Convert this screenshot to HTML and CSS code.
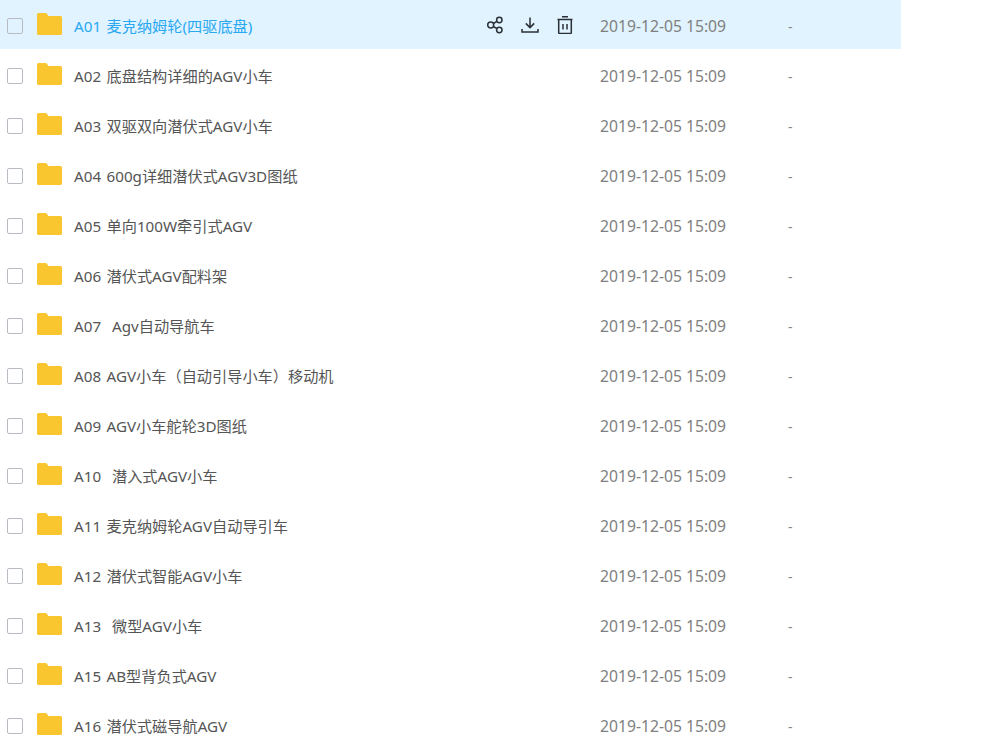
FILE: index.html
```html
<!DOCTYPE html>
<html lang="zh-CN">
<head>
<meta charset="utf-8">
<title>文件列表</title>
<link rel="stylesheet" href="styles.css">
</head>
<body>
<div class="list">
  <div class="row active">
    <span class="check"></span>
    <svg class="folder" viewBox="0 0 25 22"><path d="M0 1.500A1.500 1.500 0 0 1 1.500 0h7a1.500 1.500 0 0 1 1.200.6L11.500 3h12A1.500 1.500 0 0 1 25 4.500v16a1.500 1.500 0 0 1-1.500 1.500h-22A1.500 1.500 0 0 1 0 20.500z"/></svg>
    <span class="name">A01 麦克纳姆轮(四驱底盘)</span>
    <span class="actions">
      <svg class="icon" viewBox="0 0 18 18"><circle cx="4.700" cy="9" r="3"/><circle cx="13.300" cy="4" r="2.700"/><circle cx="13.300" cy="14" r="2.700"/><path d="M7.300 7.500l3.700-2.200M7.300 10.500l3.700 2.200"/></svg>
      <svg class="icon" viewBox="0 0 18 18"><path d="M9 1.500v10M4.800 7.400L9 11.600l4.200-4.200M1 13v3h16v-3"/></svg>
      <svg class="icon" viewBox="0 0 18 18"><path d="M6 .8h6M1.500 3.500h15M2.700 3.500V16.500a1 1 0 0 0 1 1h10.600a1 1 0 0 0 1-1V3.500M7 8v5.500M11 8v5.500"/></svg>
    </span>
    <span class="date">2019-12-05 15:09</span>
    <span class="size">-</span>
  </div>
  <div class="row"><span class="check"></span><svg class="folder" viewBox="0 0 25 22"><path d="M0 1.500A1.500 1.500 0 0 1 1.500 0h7a1.500 1.500 0 0 1 1.200.6L11.500 3h12A1.500 1.500 0 0 1 25 4.500v16a1.500 1.500 0 0 1-1.500 1.500h-22A1.500 1.500 0 0 1 0 20.500z"/></svg><span class="name">A02 底盘结构详细的AGV小车</span><span class="date">2019-12-05 15:09</span><span class="size">-</span></div>
  <div class="row"><span class="check"></span><svg class="folder" viewBox="0 0 25 22"><path d="M0 1.500A1.500 1.500 0 0 1 1.500 0h7a1.500 1.500 0 0 1 1.200.6L11.500 3h12A1.500 1.500 0 0 1 25 4.500v16a1.500 1.500 0 0 1-1.500 1.500h-22A1.500 1.500 0 0 1 0 20.500z"/></svg><span class="name">A03 双驱双向潜伏式AGV小车</span><span class="date">2019-12-05 15:09</span><span class="size">-</span></div>
  <div class="row"><span class="check"></span><svg class="folder" viewBox="0 0 25 22"><path d="M0 1.500A1.500 1.500 0 0 1 1.500 0h7a1.500 1.500 0 0 1 1.200.6L11.500 3h12A1.500 1.500 0 0 1 25 4.500v16a1.500 1.500 0 0 1-1.500 1.500h-22A1.500 1.500 0 0 1 0 20.500z"/></svg><span class="name">A04 600g详细潜伏式AGV3D图纸</span><span class="date">2019-12-05 15:09</span><span class="size">-</span></div>
  <div class="row"><span class="check"></span><svg class="folder" viewBox="0 0 25 22"><path d="M0 1.500A1.500 1.500 0 0 1 1.500 0h7a1.500 1.500 0 0 1 1.200.6L11.500 3h12A1.500 1.500 0 0 1 25 4.500v16a1.500 1.500 0 0 1-1.500 1.500h-22A1.500 1.500 0 0 1 0 20.500z"/></svg><span class="name">A05 单向100W牵引式AGV</span><span class="date">2019-12-05 15:09</span><span class="size">-</span></div>
  <div class="row"><span class="check"></span><svg class="folder" viewBox="0 0 25 22"><path d="M0 1.500A1.500 1.500 0 0 1 1.500 0h7a1.500 1.500 0 0 1 1.200.6L11.500 3h12A1.500 1.500 0 0 1 25 4.500v16a1.500 1.500 0 0 1-1.500 1.500h-22A1.500 1.500 0 0 1 0 20.500z"/></svg><span class="name">A06 潜伏式AGV配料架</span><span class="date">2019-12-05 15:09</span><span class="size">-</span></div>
  <div class="row"><span class="check"></span><svg class="folder" viewBox="0 0 25 22"><path d="M0 1.500A1.500 1.500 0 0 1 1.500 0h7a1.500 1.500 0 0 1 1.200.6L11.500 3h12A1.500 1.500 0 0 1 25 4.500v16a1.500 1.500 0 0 1-1.500 1.500h-22A1.500 1.500 0 0 1 0 20.500z"/></svg><span class="name">A07&nbsp; Agv自动导航车</span><span class="date">2019-12-05 15:09</span><span class="size">-</span></div>
  <div class="row"><span class="check"></span><svg class="folder" viewBox="0 0 25 22"><path d="M0 1.500A1.500 1.500 0 0 1 1.500 0h7a1.500 1.500 0 0 1 1.200.6L11.500 3h12A1.500 1.500 0 0 1 25 4.500v16a1.500 1.500 0 0 1-1.500 1.500h-22A1.500 1.500 0 0 1 0 20.500z"/></svg><span class="name">A08 AGV小车（自动引导小车）移动机</span><span class="date">2019-12-05 15:09</span><span class="size">-</span></div>
  <div class="row"><span class="check"></span><svg class="folder" viewBox="0 0 25 22"><path d="M0 1.500A1.500 1.500 0 0 1 1.500 0h7a1.500 1.500 0 0 1 1.200.6L11.500 3h12A1.500 1.500 0 0 1 25 4.500v16a1.500 1.500 0 0 1-1.500 1.500h-22A1.500 1.500 0 0 1 0 20.500z"/></svg><span class="name">A09 AGV小车舵轮3D图纸</span><span class="date">2019-12-05 15:09</span><span class="size">-</span></div>
  <div class="row"><span class="check"></span><svg class="folder" viewBox="0 0 25 22"><path d="M0 1.500A1.500 1.500 0 0 1 1.500 0h7a1.500 1.500 0 0 1 1.200.6L11.500 3h12A1.500 1.500 0 0 1 25 4.500v16a1.500 1.500 0 0 1-1.500 1.500h-22A1.500 1.500 0 0 1 0 20.500z"/></svg><span class="name">A10&nbsp; 潜入式AGV小车</span><span class="date">2019-12-05 15:09</span><span class="size">-</span></div>
  <div class="row"><span class="check"></span><svg class="folder" viewBox="0 0 25 22"><path d="M0 1.500A1.500 1.500 0 0 1 1.500 0h7a1.500 1.500 0 0 1 1.200.6L11.500 3h12A1.500 1.500 0 0 1 25 4.500v16a1.500 1.500 0 0 1-1.500 1.500h-22A1.500 1.500 0 0 1 0 20.500z"/></svg><span class="name">A11 麦克纳姆轮AGV自动导引车</span><span class="date">2019-12-05 15:09</span><span class="size">-</span></div>
  <div class="row"><span class="check"></span><svg class="folder" viewBox="0 0 25 22"><path d="M0 1.500A1.500 1.500 0 0 1 1.500 0h7a1.500 1.500 0 0 1 1.200.6L11.500 3h12A1.500 1.500 0 0 1 25 4.500v16a1.500 1.500 0 0 1-1.500 1.500h-22A1.500 1.500 0 0 1 0 20.500z"/></svg><span class="name">A12 潜伏式智能AGV小车</span><span class="date">2019-12-05 15:09</span><span class="size">-</span></div>
  <div class="row"><span class="check"></span><svg class="folder" viewBox="0 0 25 22"><path d="M0 1.500A1.500 1.500 0 0 1 1.500 0h7a1.500 1.500 0 0 1 1.200.6L11.500 3h12A1.500 1.500 0 0 1 25 4.500v16a1.500 1.500 0 0 1-1.500 1.500h-22A1.500 1.500 0 0 1 0 20.500z"/></svg><span class="name">A13&nbsp; 微型AGV小车</span><span class="date">2019-12-05 15:09</span><span class="size">-</span></div>
  <div class="row"><span class="check"></span><svg class="folder" viewBox="0 0 25 22"><path d="M0 1.500A1.500 1.500 0 0 1 1.500 0h7a1.500 1.500 0 0 1 1.200.6L11.500 3h12A1.500 1.500 0 0 1 25 4.500v16a1.500 1.500 0 0 1-1.500 1.500h-22A1.500 1.500 0 0 1 0 20.500z"/></svg><span class="name">A15 AB型背负式AGV</span><span class="date">2019-12-05 15:09</span><span class="size">-</span></div>
  <div class="row"><span class="check"></span><svg class="folder" viewBox="0 0 25 22"><path d="M0 1.500A1.500 1.500 0 0 1 1.500 0h7a1.500 1.500 0 0 1 1.200.6L11.500 3h12A1.500 1.500 0 0 1 25 4.500v16a1.500 1.500 0 0 1-1.500 1.500h-22A1.500 1.500 0 0 1 0 20.500z"/></svg><span class="name">A16 潜伏式磁导航AGV</span><span class="date">2019-12-05 15:09</span><span class="size">-</span></div>
</div>
</body>
</html>
```
FILE: styles.css
```css
html, body {
  margin: 0;
  padding: 0;
  height: 742px;
  overflow: hidden;
  background: #fff;
}
body {
  font-family: "Noto Sans", "Noto Sans CJK SC", sans-serif;
  font-size: 14px;
  color: #666;
}
.list {
  width: 901px;
}
.row {
  display: flex;
  align-items: center;
  height: 50px;
  box-sizing: border-box;
  padding-left: 7px;
  border-bottom: 1px solid transparent;
  background-clip: padding-box;
}
.row.active {
  background-color: #e0f3fe;
}
.check {
  flex: none;
  width: 14px;
  height: 14px;
  border: 1px solid #b8bcc2;
  border-radius: 2px;
  margin-top: 3px;
}
.folder {
  flex: none;
  width: 25px;
  height: 22px;
  margin-left: 14px;
  margin-top: -1px;
  fill: #f9c62f;
}
.name {
  flex: 1;
  margin-left: 12px;
  font-size: 15.2px;
  word-spacing: 1.5px;
  color: #555;
  white-space: nowrap;
}
.active .name {
  color: #2aa8f2;
}
.actions {
  flex: none;
  display: flex;
  gap: 17px;
  margin-right: 26px;
}
.icon {
  width: 18px;
  height: 18px;
  fill: none;
  stroke: #2b2f36;
  stroke-width: 1.500;
}
.date {
  flex: none;
  width: 188px;
  margin-top: 3px;
  font-size: 15.7px;
  color: #808080;
  white-space: nowrap;
}
.size {
  flex: none;
  width: 113px;
  margin-top: 3px;
  color: #888;
}
```
